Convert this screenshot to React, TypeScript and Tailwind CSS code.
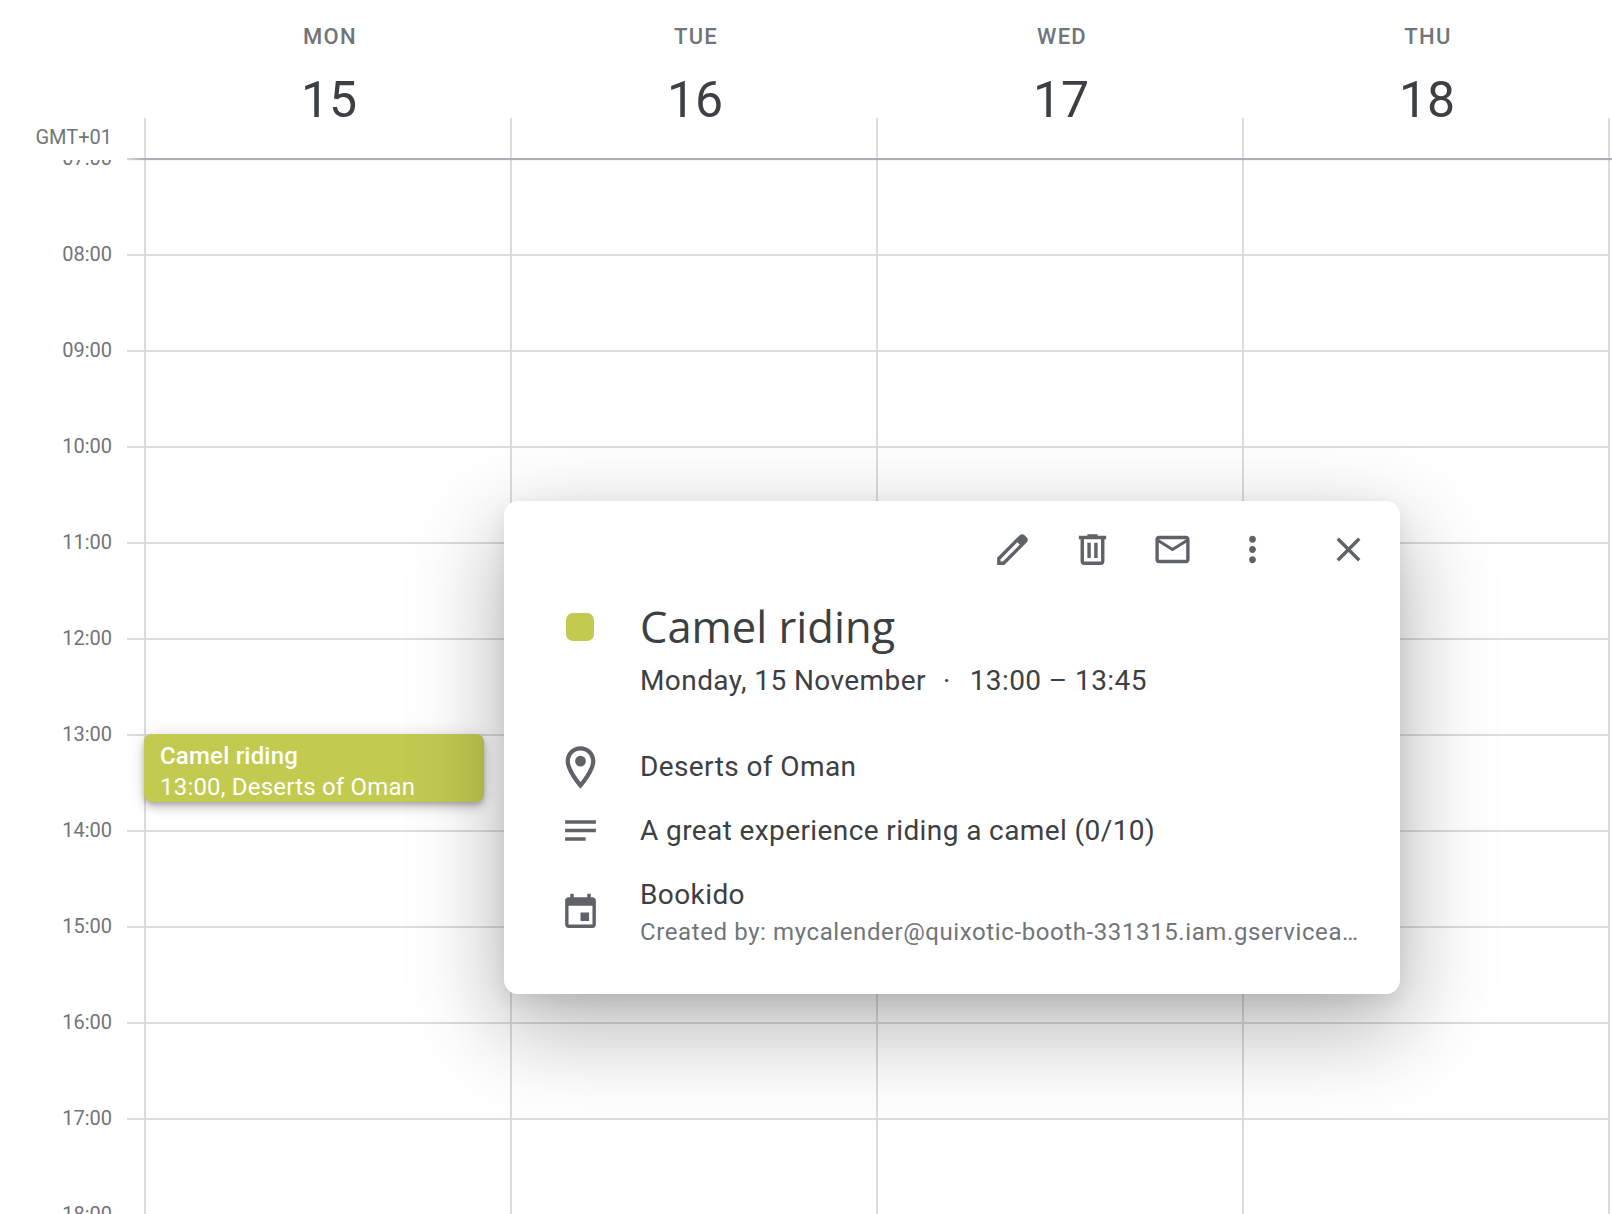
import React from 'react'

const hours = ['07:00', '08:00', '09:00', '10:00', '11:00', '12:00', '13:00', '14:00', '15:00', '16:00', '17:00', '18:00']

const days = [
  { name: 'MON', date: '15' },
  { name: 'TUE', date: '16' },
  { name: 'WED', date: '17' },
  { name: 'THU', date: '18' },
]

function Icon({ d, className = 'w-[41px] h-[41px]', children }: { d?: string; className?: string; children?: React.ReactNode }) {
  return (
    <svg viewBox="0 0 24 24" className={`shrink-0 fill-[#5f6368] ${className}`}>
      {d && <path d={d} />}
      {children}
    </svg>
  )
}

function HourRow({ label }: { label: string }) {
  return (
    <div className="flex h-[96px] items-center">
      <div className="w-[112px] shrink-0 pb-[3px] text-right text-[20px] text-[#70757a]">{label}</div>
      <div className="w-[15px] shrink-0" />
      <div className="h-[2px] w-[17px] shrink-0 bg-[#dadce0]" />
      {days.map((day) => (
        <div key={day.name} className="flex h-full w-[366px] shrink-0 items-center border-l-2 border-[#dadce0]">
          <div className="h-[2px] w-full bg-[#dadce0]" />
        </div>
      ))}
      <div className="h-full w-[2px] shrink-0 bg-[#dadce0]" />
    </div>
  )
}

function DetailRow({ icon, children }: { icon: React.ReactNode; children: React.ReactNode }) {
  return (
    <div className="flex items-center">
      <div className="ml-[51px] mr-[35px] flex w-[50px] shrink-0 justify-center">{icon}</div>
      <div className="min-w-0 flex-1">{children}</div>
    </div>
  )
}

function EventPopup() {
  return (
    <div className="absolute left-[504px] top-[501px] z-20 h-[493px] w-[896px] rounded-[14px] bg-white shadow-[0_32px_90px_6px_rgba(0,0,0,0.28),0_8px_20px_rgba(0,0,0,0.08)]">
      <div className="flex h-[96px] items-center justify-end pr-[12px]">
        <div className="flex w-[80px] justify-center">
          <Icon d="M20.41 4.94l-1.35-1.35c-.78-.78-2.05-.78-2.83 0L3 16.82V21h4.18L20.41 7.77c.79-.78.79-2.05 0-2.83zm-14 14.12L5 19v-1.36l9.82-9.82 1.41 1.41-9.82 9.83z" />
        </div>
        <div className="flex w-[80px] justify-center">
          <Icon d="M15 4V3H9v1H4v2h1v13c0 1.1.9 2 2 2h10c1.1 0 2-.9 2-2V6h1V4h-5zm2 15H7V6h10v13zM9 8h2v9H9V8zm4 0h2v9h-2V8z" />
        </div>
        <div className="flex w-[80px] justify-center">
          <Icon d="M20 4H4c-1.1 0-2 .9-2 2v12c0 1.1.9 2 2 2h16c1.1 0 2-.9 2-2V6c0-1.1-.9-2-2-2zm0 14H4V8l8 5 8-5v10zm-8-7L4 6h16l-8 5z" />
        </div>
        <div className="flex w-[80px] justify-center">
          <Icon d="M12 8c1.1 0 2-.9 2-2s-.9-2-2-2-2 .9-2 2 .9 2 2 2zm0 2c-1.1 0-2 .9-2 2s.9 2 2 2 2-.9 2-2-.9-2-2-2zm0 6c-1.1 0-2 .9-2 2s.9 2 2 2 2-.9 2-2-.9-2-2-2z" />
        </div>
        <div className="ml-[16px] flex w-[80px] justify-center">
          <Icon d="M19 6.41L17.59 5 12 10.59 6.41 5 5 6.41 10.59 12 5 17.59 6.41 19 12 13.41 17.59 19 19 17.59 13.41 12 19 6.41z" />
        </div>
      </div>

      <DetailRow icon={<div className="h-[28px] w-[28px] rounded-[7px] bg-[#c2ca50]" />}>
        <div className="text-[43.5px] leading-[60px] text-[#3c4043] font-['Open_Sans',sans-serif] font-normal">Camel riding</div>
      </DetailRow>
      <div className="mt-[6px] pl-[136px] text-[28px] leading-[36px] tracking-[0.42px] text-[#3c4043]">
        Monday, 15 November<span className="ml-[17px] mr-[19px]">·</span>13:00 – 13:45
      </div>

      <div className="mt-[48px]">
        <DetailRow icon={<div className="flex h-[40px] items-center"><Icon className="h-[51px] w-[51px]" d="M12 2C8.13 2 5 5.13 5 9c0 5.25 7 13 7 13s7-7.75 7-13c0-3.87-3.13-7-7-7zM7 9c0-2.76 2.24-5 5-5s5 2.24 5 5c0 2.88-2.88 7.19-5 9.88C9.92 16.21 7 11.85 7 9z"><circle cx="12" cy="9" r="2.5" /></Icon></div>}>
          <div className="text-[28px] leading-[40px] tracking-[0.4px] text-[#3c4043]">Deserts of Oman</div>
        </DetailRow>
      </div>
      <div className="mt-[23px]">
        <DetailRow icon={<Icon d="M3 18h12v-2H3v2zM3 6v2h18V6H3zm0 7h18v-2H3v2z" />}>
          <div className="text-[28px] leading-[40px] tracking-[0.4px] text-[#3c4043]">A great experience riding a camel (0/10)</div>
        </DetailRow>
      </div>
      <div className="mt-[26px] pr-[40px]">
        <DetailRow icon={<div className="mb-[5px]"><Icon d="M17 12h-5v5h5v-5zM16 1v2H8V1H6v2H5c-1.11 0-1.99.9-1.99 2L3 19c0 1.1.89 2 2 2h14c1.1 0 2-.9 2-2V5c0-1.1-.9-2-2-2h-1V1h-2zm3 18H5V8h14v11z" /></div>}>
          <div className="text-[28px] leading-[36px] tracking-[0.4px] text-[#3c4043]">Bookido</div>
          <div className="truncate text-[24px] leading-[39px] tracking-[0.6px] text-[#70757a]">Created by: mycalender@quixotic-booth-331315.iam.gserviceaccount.com</div>
        </DetailRow>
      </div>
    </div>
  )
}

export default function App() {
  return (
    <div className="relative flex h-[1214px] w-[1612px] flex-col overflow-hidden bg-white font-['Roboto',sans-serif]">
      {/* Day header */}
      <div className="flex h-[158px] shrink-0">
        <div className="flex w-[144px] shrink-0 flex-col justify-end pb-[9px] pr-[32px] text-right text-[20px] leading-[24px] text-[#70757a]">GMT+01</div>
        {days.map((day) => (
          <div key={day.name} className="flex w-[366px] shrink-0 flex-col">
            <div className="h-[118px] pl-[6px] pt-[22px] text-center">
              <div className="text-[22px] leading-[30px] font-medium tracking-[1.3px] text-[#70757a]">{day.name}</div>
              <div className="mt-[18px] pr-[2px] text-[50px] leading-[60px] text-[#3c4043]">{day.date}</div>
            </div>
            <div className="flex-1 border-l-2 border-[#dadce0]" />
          </div>
        ))}
        <div className="mt-[118px] w-[2px] shrink-0 bg-[#dadce0]" />
      </div>
      <div className="relative z-[1] ml-[127px] h-[2px] shrink-0 bg-[linear-gradient(to_right,#dadce0,#abaeb2_17px)] shadow-[0_1px_2px_rgba(0,0,0,0.06)]" />

      {/* Time grid */}
      <div className="relative flex-1 overflow-hidden">
        <div className="mt-[-49px]">
          {hours.map((hour) => (
            <HourRow key={hour} label={hour} />
          ))}
        </div>
        <div className="absolute left-[144px] top-[574px] z-10 h-[68px] w-[340px] rounded-[8px] bg-[#c2ca50] px-[16px] py-[7px] text-[24px] leading-[30px] tracking-[0.2px] text-white shadow-[0_6px_10px_rgba(0,0,0,0.14),0_1px_18px_rgba(0,0,0,0.12),0_3px_5px_-1px_rgba(0,0,0,0.2)]">
          <div className="font-medium">Camel riding</div>
          <div className="mt-px">13:00, Deserts of Oman</div>
        </div>
      </div>

      <EventPopup />
    </div>
  )
}
